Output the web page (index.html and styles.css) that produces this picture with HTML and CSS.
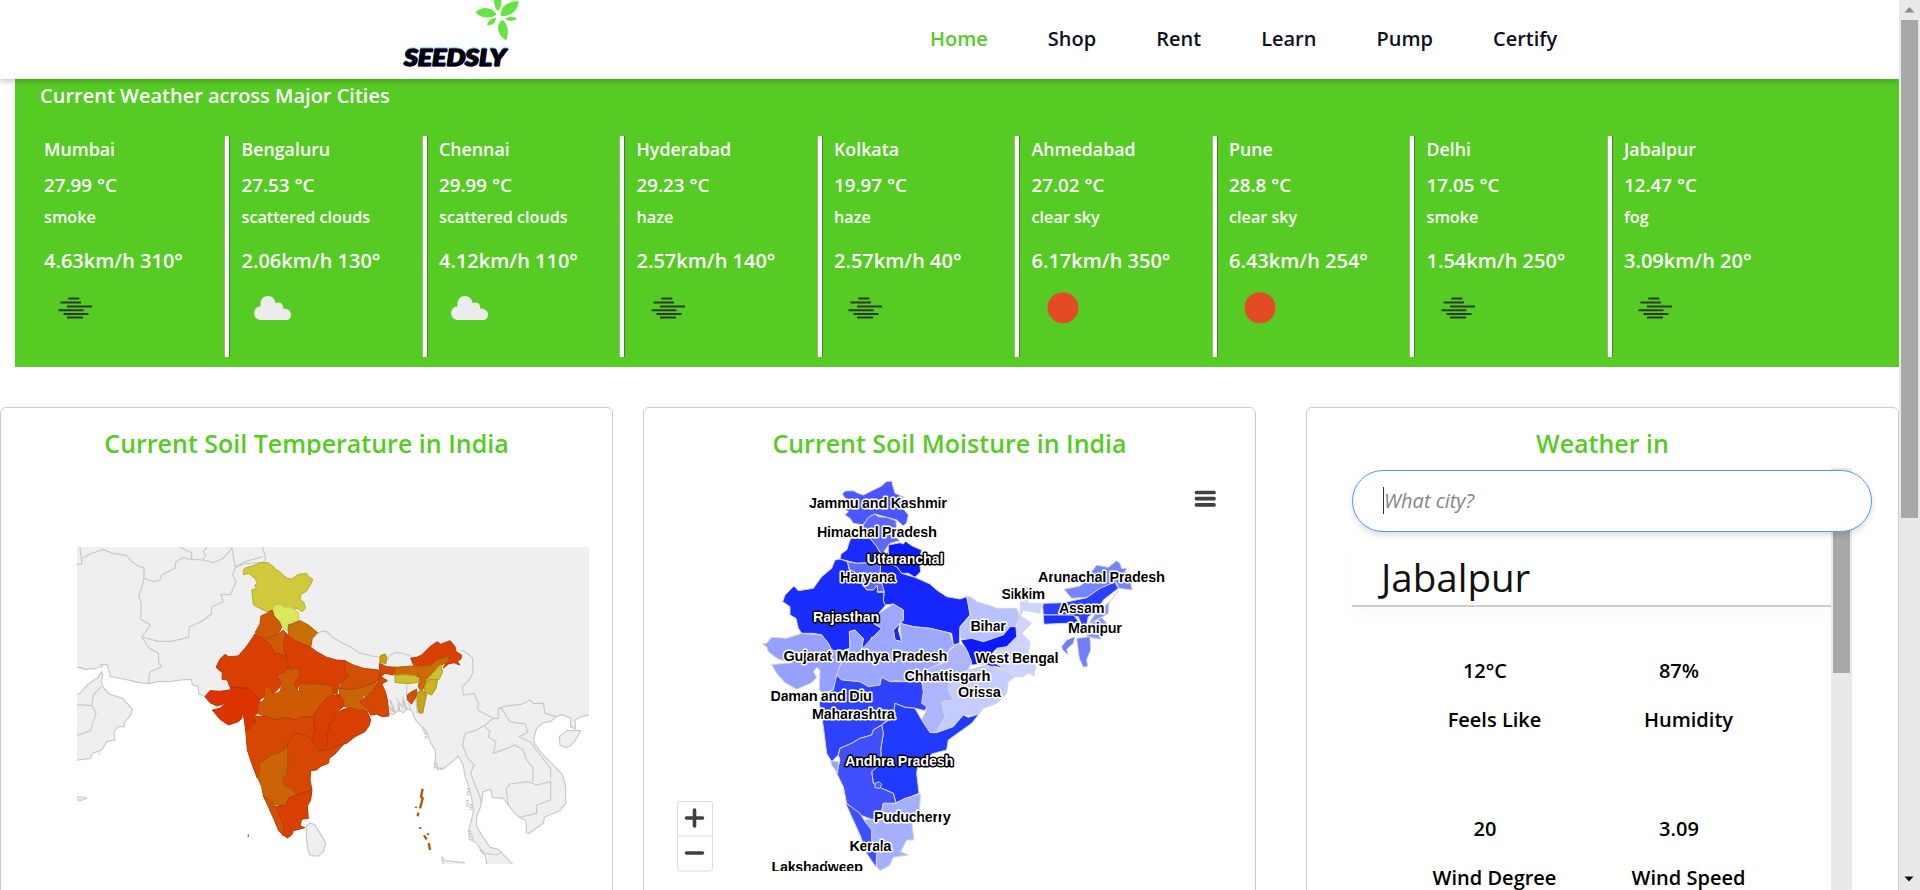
FILE: index.html
```html
<!DOCTYPE html>
<html lang="en">
<head>
<meta charset="utf-8">
<title>Seedsly</title>
<link rel="stylesheet" href="styles.css">
</head>
<body>
<svg class="defs" width="0" height="0" aria-hidden="true">
  <symbol id="haze" viewBox="0 0 40 36"><path d="M12.300 10.500h11M4.500 14.400h20.500M11 18.400h25M2.500 22.200h25M7.500 26h25M11 29.500h16" stroke="#2e3a28" stroke-width="2" fill="none"/></symbol>
  <symbol id="cloud" viewBox="0 0 40 36"><path transform="translate(-3.200 0) scale(1.030 1)" d="M9 32a7 7 0 0 1-1-13.500h1.500C8.500 12 12 8 16.500 8c4.500 0 7 3.200 7.600 7.300 4-2.300 7.900.7 7.400 5.400C36.500 20.500 39 23 39 26.500c0 3-1.500 5.500-4 5.500z" fill="#ececec"/></symbol>
  <symbol id="sun" viewBox="0 0 40 36"><circle cx="19" cy="19.800" r="15.500" fill="#e34a26"/></symbol>
</svg>
<div class="window">
  <div class="page">
    <header class="header">
      <svg class="logo" viewBox="400 0 124 79">
        <g transform="translate(380 0) scale(.33333)" fill="#66e445">
          <path d="M342 0C341 14 345 25 354 34C362 25 365 12 364 0Z"/>
          <path d="M363 48C360 22 379 5 416 3C414 32 394 49 363 48Z"/>
          <path d="M287 38C303 19 333 19 350 43C334 57 307 56 287 38Z"/>
          <path d="M375 57C386 49 401 50 411 55C401 65 387 65 375 57Z"/>
          <path d="M348 54C347 68 338 77 321 76C324 62 333 54 348 54Z"/>
          <path d="M366 59C381 67 389 91 379 121C355 108 344 80 366 59Z"/>
        </g>
        <g class="wordmark">
          <text x="403.500" y="64.700" fill="#35e0e0" stroke="#35e0e0" textLength="102" lengthAdjust="spacingAndGlyphs">SEEDSLY</text>
          <text x="404.500" y="66.300" fill="#f52af5" stroke="#f52af5" textLength="102" lengthAdjust="spacingAndGlyphs">SEEDSLY</text>
          <text x="404" y="65.500" fill="#000" stroke="#000" textLength="102" lengthAdjust="spacingAndGlyphs">SEEDSLY</text>
        </g>
      </svg>
      <nav class="nav"><a class="active">Home</a><a>Shop</a><a>Rent</a><a>Learn</a><a>Pump</a><a>Certify</a></nav>
    </header>

    <section class="cities">
      <h2>Current Weather across Major Cities</h2>
      <div class="city-row">
        <div class="city"><b>Mumbai</b><i>27.99 °C</i><em>smoke</em><i class="wind">4.63km/h 310°</i><svg><use href="#haze"/></svg></div>
        <div class="city"><b>Bengaluru</b><i>27.53 °C</i><em>scattered clouds</em><i class="wind">2.06km/h 130°</i><svg><use href="#cloud"/></svg></div>
        <div class="city"><b>Chennai</b><i>29.99 °C</i><em>scattered clouds</em><i class="wind">4.12km/h 110°</i><svg><use href="#cloud"/></svg></div>
        <div class="city"><b>Hyderabad</b><i>29.23 °C</i><em>haze</em><i class="wind">2.57km/h 140°</i><svg><use href="#haze"/></svg></div>
        <div class="city"><b>Kolkata</b><i>19.97 °C</i><em>haze</em><i class="wind">2.57km/h 40°</i><svg><use href="#haze"/></svg></div>
        <div class="city"><b>Ahmedabad</b><i>27.02 °C</i><em>clear sky</em><i class="wind">6.17km/h 350°</i><svg><use href="#sun"/></svg></div>
        <div class="city"><b>Pune</b><i>28.8 °C</i><em>clear sky</em><i class="wind">6.43km/h 254°</i><svg><use href="#sun"/></svg></div>
        <div class="city"><b>Delhi</b><i>17.05 °C</i><em>smoke</em><i class="wind">1.54km/h 250°</i><svg><use href="#haze"/></svg></div>
        <div class="city"><b>Jabalpur</b><i>12.47 °C</i><em>fog</em><i class="wind">3.09km/h 20°</i><svg><use href="#haze"/></svg></div>
      </div>
    </section>

    <main class="cards">
      <section class="card soil">
        <h3 class="clipped">Current Soil Temperature in India</h3>
        <svg class="temp-map" viewBox="77 547 512 317">
          <g transform="translate(60 540) scale(.33333)" fill="#efefef" stroke="#c9c9c9" stroke-width="3.500" stroke-linejoin="round">
            <path d="M40 10V381L60 383 78 389 90 385 100 388 115 381 128 380 122 374 141 373 147 390 150 409 175 414 200 419 235 427 265 431 300 424 330 425 360 420 393 418 398 435 415 440 416 462 432 468 600 560 900 540 960 520 985 520 1000 524 1015 510 1030 518 1040 505 1055 512 1065 538 1085 560 1100 575 1110 605 1125 630 1127 645 1123 683 1150 686 1185 658 1195 648 1210 675 1215 710 1228 745 1235 775 1240 815 1232 850 1226 870 1228 898 1250 908 1262 930 1275 945 1282 980H1365L1330 944 1315 928 1290 922 1268 890 1250 860 1250 828 1262 800 1270 755 1292 748 1297 772 1330 775 1345 795 1360 815 1378 832 1398 842 1400 885 1450 850 1453 832 1500 812 1517 790 1517 740 1508 705 1470 665 1445 640 1425 612 1420 598 1430 565 1450 548 1470 545 1490 530 1505 524 1532 535 1532 560 1546 567 1545 540 1565 529 1600 523V10Z"/>
            <path d="M40 468L62 458 85 432 115 412 125 395 128 405 124 425 130 442 148 462 188 475 217 508 212 525 195 545 192 560 175 560 162 575 165 600 140 605 125 630 97 640 92 655 40 662Z"/>
            <path d="M40 493L95 497 108 518 92 572 40 590M95 497 100 465 124 440M115 641h5" fill="none"/>
            <path d="M40 770L65 771 80 775 65 781 40 779ZM739 860L750 848 765 855 780 880 797 908 790 935 775 948 750 947 743 925 739 890ZM1498 590L1520 572 1562 572 1550 595 1535 615 1520 623 1500 615Z"/>
            <path d="M60 20L64 57 90 42 130 29 160 40 200 47 212 62 235 79 252 82 252 112 245 145 236 165 244 190 242 238 272 255 245 291 296 304 335 304 386 292 388 260 420 247 455 222 455 200 490 185 482 164 512 163 528 125 518 105 525 85 550 72 610 67 617 55 608 20M252 115L282 125 300 120 305 105 345 85 348 65 370 52 395 60 395 38 360 22M395 58L430 60 437 45 430 35 442 20M430 60L460 68 490 55 515 25 M515 20L525 80 555 65 608 50 M245 291L268 325 295 340 297 370 305 380 270 395 265 431M51 73h14V57" fill="none"/>
            <path d="M773 280L785 274 800 275 812 288 845 308 875 322 895 338 935 348 955 350M980 362L990 345 1010 337 1035 342 1052 348 1060 358M1205 330L1225 342 1238 355 1239 398 1225 422 1207 440 1210 465 1242 460 1255 490 1253 510 1300 535 1315 535 1315 505 1345 497 1385 493 1410 480 1420 490 1450 490 1455 520 1490 530M1315 505L1325 505 1350 545 1378 550 1395 550 1403 578 1376 590 1410 605 1440 645 1472 685 1472 715M1300 535L1275 555 1245 572 1215 580 1208 615 1220 650 1242 675 1232 700 1245 735 1258 765 1265 790M1275 560L1290 575 1285 590 1308 605 1300 640 1340 625 1365 615 1390 630 1400 660 1420 685 1418 725M1338 745L1350 732 1405 725 1430 735 1472 725 1472 780 1430 795 1430 820 1378 832M1338 745L1345 795M1280 940L1310 945 1325 935" fill="none"/>
            <path d="M1018 430L1040 428 1040 470 1065 465 1072 520M1010 475L1025 500M1030 470L1028 505M1045 475L1052 510" fill="none"/>
            <path d="M978 490L1000 515M990 480L1005 518M1015 490L1018 515M1030 480L1040 510" fill="none" stroke-width="6"/>
            <path d="M1088 562l8 20M1100 580l-4 18M1127 670l8 18 15-2M1225 745v22M1222 780v20M1232 792v18M1228 872l12 28M1262 930l14 14" fill="none" stroke-width="8" stroke-dasharray="5 3"/>
            <path d="M1145 950L1155 962 1212 968V975H1150Z"/>
            <path d="M1410 882L1440 886 1430 960 1380 960 1380 882Z" fill="#fff" stroke="none"/>
          </g>
          <g transform="translate(200 550) scale(.33333)" stroke-width="3" stroke-linejoin="round">
            <path d="M130 62L135 54 150 50 165 45 180 38 205 38 220 50 230 60 240 65 250 76 262 85 275 87 285 80 295 73 320 70 326 80 338 88 334 100 328 110 318 125 303 132 300 148 312 158 316 175 306 185 292 175 270 180 255 172 240 162 222 166 218 180 200 185 180 175 160 165 158 145 155 120 170 115 164 106 172 100 165 85 155 78 147 70 130 74Z" fill="#d0c93c" stroke="#b3ad33"/>
            <path d="M218 180L222 166 240 162 255 172 270 170 285 180 295 188 297 213 275 215 265 225 263 242 250 232 240 215 228 205 220 195Z" fill="#dbe85f" stroke="#bccb4f"/>
            <path d="M183 198L200 190 212 182 218 182 222 198 238 215 245 232 235 250 215 262 185 262 165 248 180 222Z" fill="#cf5a05" stroke="#b04c04"/>
            <path d="M188 265L215 262 240 248 250 240 258 250 250 275 258 318 240 312 222 308 212 285 195 275Z" fill="#cf5a05" stroke="#b04c04"/>
            <path d="M265 225L285 218 300 212 325 225 353 248 337 265 332 292 310 285 285 272 265 262Z" fill="#c96e07" stroke="#ab5e06"/>
            <path d="M258 250L270 262 285 272 332 292 350 305 380 322 410 330 435 332 440 345 435 360 447 378 430 392 418 405 410 432 400 430 398 408 350 402 320 405 300 400 290 420 280 400 297 380 298 358 265 355 258 318 250 290Z" fill="#da3f02" stroke="#b93602"/>
            <path d="M165 252L188 265 212 285 222 308 240 312 258 318 265 345 262 358 235 380 245 400 240 412 220 432 212 412 195 412 192 440 178 450 160 430 145 415 110 413 90 412 82 390 66 388 67 368 48 352 60 328 75 313 85 320 115 318 135 295 150 275Z" fill="#da3f02" stroke="#b93602"/>
            <path d="M15 440L30 422 60 424 90 420 92 412 145 415 162 432 180 450 172 490 160 500 168 518 150 535 137 540 133 510 128 485 125 505 115 515 85 525 60 508 37 480 60 475 77 460 50 468 30 458Z" fill="#dc3400" stroke="#bd2d00"/>
            <path d="M195 412L212 412 218 434 240 425 248 400 235 385 262 358 298 355 300 375 285 395 280 410 298 425 300 400 350 402 398 408 400 435 385 440 365 460 352 480 340 500 300 502 290 510 255 502 225 510 200 500 172 490 175 462 192 450Z" fill="#cf5a05" stroke="#b04c04"/>
            <path d="M137 540L150 535 168 518 160 498 200 500 225 510 255 502 290 510 300 502 340 500 345 520 342 550 335 565 310 555 285 548 265 575 262 592 240 608 215 615 195 630 178 640 180 660 172 685 155 640 142 600Z" fill="#d54703" stroke="#b63c02"/>
            <path d="M365 460L385 440 418 432 432 450 430 470 405 490 400 515 388 520 390 545 380 548 385 570 370 600 355 603 340 580 335 565 345 545 340 500 352 480Z" fill="#da3f02" stroke="#b93602"/>
            <path d="M432 478L450 472 480 482 500 480 512 510 508 525 495 545 465 560 440 580 405 590 390 598 372 602 385 570 380 548 390 545 388 520 400 515 405 490Z" fill="#da3f02" stroke="#b93602"/>
            <path d="M418 415L450 418 485 412 520 395 532 400 520 425 490 438 480 455 502 475 480 482 450 472 432 470 432 450 420 435Z" fill="#cb6406" stroke="#ad5505"/>
            <path d="M435 332L460 345 490 355 535 360 540 375 530 395 485 412 450 418 418 415 430 392 447 378 435 360Z" fill="#d15004" stroke="#b24403"/>
            <path d="M538 340L560 350 588 352 580 375 555 370 543 380 562 392 545 402 556 425 562 450 567 498 545 500 530 492 512 495 500 475 480 455 495 440 520 425 532 400 540 375Z" fill="#d54703" stroke="#b63c02"/>
            <path d="M285 548L310 555 335 565 340 585 355 603 390 598 435 578 405 612 388 625 385 640 360 650 350 660 332 662 330 690 336 720 310 728 290 735 270 715 250 705 248 685 262 670 262 592 265 575Z" fill="#d54703" stroke="#b63c02"/>
            <path d="M178 640L195 630 215 615 240 608 262 592 264 640 260 670 248 685 250 705 270 715 290 735 265 745 260 762 240 768 215 758 190 738 185 710 174 685 180 660Z" fill="#cb6406" stroke="#ad5505"/>
            <path d="M230 770L260 765 265 745 290 735 336 720 332 750 322 768 325 805 305 808 300 828 315 833 280 842 275 855 262 864 250 855 252 830 240 800Z" fill="#da3f02" stroke="#b93602"/>
            <path d="M190 738L215 758 230 770 240 800 252 830 250 858 235 840 222 808 205 770Z" fill="#d15004" stroke="#b24403"/>
            <path d="M540 318L555 312 560 322 558 340 540 338Z" fill="#c7a114" stroke="#a98910"/>
            <path d="M632 325L650 322 665 315 690 290 712 275 722 283 750 272 765 290 768 305 785 315 782 328 772 333 779 345 762 338 745 342 730 354 745 325 735 320 700 338 690 347 642 347Z" fill="#da3f02" stroke="#b93602"/>
            <path d="M585 352L640 348 690 347 710 330 745 319 745 335 725 345 700 370 680 392 665 425 655 410 660 385 650 378 620 375 585 378Z" fill="#cb6b07" stroke="#ad5b06"/>
            <path d="M585 376L620 374 648 378 660 396 625 401 585 397Z" fill="#ccc02b" stroke="#aea424"/>
            <path d="M677 392L700 368 722 343 728 365 718 388 690 390Z" fill="#ccc02b" stroke="#aea424"/>
            <path d="M674 408L688 388 713 390 708 415 695 435 672 425Z" fill="#cab422" stroke="#ac991d"/>
            <path d="M650 430L662 420 680 432 672 470 668 490 657 488 652 460Z" fill="#c5a81a" stroke="#a88f16"/>
            <path d="M622 435L635 425 650 418 648 440 635 462 622 450Z" fill="#d05208" stroke="#b24403"/>
            <path d="M668 716L663 740 668 745 660 775M648 770v4M655 788L653 799M661 832v5M672 856l8 12M684 850v5M686 880l4 20M143 857h4" fill="none" stroke="#b95204" stroke-width="7"/>
          </g>
        </svg>
      </section>

      <section class="card moisture">
        <h3>Current Soil Moisture in India</h3>
        <svg class="moist-map" viewBox="663 471 570 401">
          <g stroke="#d6d6d6" stroke-width="3" stroke-linejoin="round">
            <g transform="translate(640 400) scale(.33333)">
              <path d="M607 283L615 273 640 272 655 280 670 285 700 270 725 258 738 245 755 243 758 255 765 280 790 290 785 320 805 345 800 368 790 378 770 360 740 352 705 342 685 355 668 375 640 370 630 355 615 345 625 335 607 320 620 300Z" fill="#4b56ff"/>
              <path d="M668 378L685 352 705 342 715 350 740 352 768 362 770 385 765 410 780 422 750 430 735 450 728 468 710 440 690 415 672 400Z" fill="#5d66ff"/>
              <path d="M632 415L690 415 710 440 722 460 700 488 650 490 600 477 603 462 620 450Z" fill="#1a2cff"/>
              <path d="M745 435L780 428 790 432 797 424 815 437 845 450 838 480 842 515 825 532 805 520 785 520 770 500 745 490Z" fill="#0d1cff"/>
              <path d="M622 485L650 490 700 488 715 470 722 490 720 530 733 555 733 575 712 575 712 556 700 570 680 570 665 550 645 545 643 515 630 510Z" fill="#5d68ff"/>
              <path d="M600 477L622 485 628 510 643 515 645 545 665 550 680 570 700 570 712 556 712 577 733 577 730 600 738 615 720 635 700 670 725 685 715 710 695 712 685 735 665 748 670 715 645 690 628 695 630 745 600 755 575 750 565 730 545 705 520 700 485 700 475 685 468 655 450 645 450 620 428 605 435 585 462 558 475 572 520 565 545 530 575 505 585 480Z" fill="#1a2dff"/>
              <path d="M722 495L728 468 745 455 745 490 770 500 785 520 825 532 870 552 890 570 920 590 960 597 980 590 985 615 990 645 960 680 958 735 940 735 935 700 870 685 820 680 780 670 775 690 785 725 765 720 760 690 790 660 790 630 760 612 735 615 730 600 733 575 720 530Z" fill="#1626ff"/>
            </g>
            <g transform="translate(900 460) scale(.33333)">
              <path d="M362 425L390 430 425 430 420 460 395 455 370 450 362 468 395 490 365 520 390 545 385 580 407 620 402 648 385 638 370 650 345 650 310 630 285 605 290 565 320 560 350 530 350 500 360 470Z" fill="#cdd4ff"/>
              <path d="M360 395L375 378 388 388 385 425 362 420Z" fill="#d0d6ff"/>
              <path d="M200 408L215 412 230 425 270 437 290 445 350 445 360 470 345 500 330 500 310 530 250 545 182 535 180 505 212 465 205 435Z" fill="#b7c2ff"/>
              <path d="M182 540L215 535 250 545 310 525 330 500 348 500 350 530 320 560 290 565 260 600 285 610 312 625 280 618 280 632 255 612 215 615 205 580Z" fill="#0d1aff"/>
              <path d="M492 388L540 378 575 350 575 335 590 315 625 322 650 302 660 310 665 325 680 325 672 345 692 370 697 390 655 385 650 368 590 395 560 412 515 415Z" fill="#7684ff"/>
              <path d="M590 455L630 425 655 392 627 430 625 460 600 475 565 492ZM570 490L605 472 620 490 600 538 560 530Z" fill="#8a96ff"/>
              <path d="M428 440L430 430 490 428 560 413 600 385 645 366 655 385 610 420 590 455 565 470 560 495 548 505 535 470 480 465 430 465Z" fill="#2b40ff"/>
              <path d="M430 465L520 465 540 490 490 490 432 493Z" fill="#1a32ff"/>
              <path d="M530 535L570 530 572 570 560 600 563 618 550 622 538 595ZM485 560L500 540 525 530 520 550 500 568 505 585 488 570Z" fill="#6f7dff"/>
            </g>
            <g transform="translate(660 640) scale(.33333)">
              <path d="M307 12L320 10 335 -8 380 -5 425 -20 485 -15 505 10 515 30 540 35 545 65 530 110 520 150 490 160 478 150 480 90 470 82 460 95 470 112 455 128 410 148 375 128 350 100 335 74 395 68 355 58 325 35 320 20Z" fill="#96a0ff"/>
              <path d="M540 35L570 25 568 -25 585 -30 610 -5 605 28 640 -10 665 -35 640 -50 658 -80 700 -108 730 -90 730 -60 700 -30 705 0 725 5 720 -50 760 -40 810 -35 870 -20 880 15 898 10 870 25 850 65 800 90 785 125 735 125 710 122 690 125 665 112 660 135 625 140 600 125 545 120 530 105 545 65Z" fill="#9ca8ff"/>
              <path d="M790 100L815 82 850 70 865 35 895 10 915 20 935 65 925 90 870 110 865 150 880 180 845 185 855 230 830 275 810 278 785 240 800 210 785 190Z" fill="#adb5ff"/>
              <path d="M925 90L980 75 1030 90 1065 110 1045 125 1040 160 1010 190 970 205 955 225 910 225 880 260 830 278 855 230 845 185 880 180 865 150 870 110Z" fill="#c5ccff"/>
              <path d="M530 105L545 120 600 125 625 140 660 135 665 112 690 125 735 125 785 125 790 155 785 190 800 200 795 212 765 205 735 202 705 190 700 230 680 240 665 255 640 270 635 285 600 295 575 310 540 325 535 345 515 365 500 340 490 260 478 190 490 160 520 150Z" fill="#2f43ff"/>
              <path d="M705 190L735 202 765 205 785 240 810 278 830 278 880 260 910 225 925 232 957 222 935 250 900 275 865 300 860 330 815 342 805 355 775 365 770 400 777 460 740 475 708 488 700 460 665 445 640 430 635 395 650 380 665 370 662 330 670 280 665 255 700 230Z" fill="#213aff"/>
              <path d="M535 345L540 325 575 310 600 295 635 285 640 270 665 255 670 280 662 330 665 370 635 395 640 430 665 445 700 460 708 490 670 490 665 515 640 540 600 525 560 490 550 440 530 400 540 360Z" fill="#4050ff"/>
              <path d="M512 362L535 365 533 400 515 375Z" fill="#96a0ff"/>
              <path d="M645 430l12-5 8 8-5 12-15-2z" fill="#4b5aff"/>
              <path d="M612 540L640 538 665 515 670 490 708 490 735 475 782 462 778 510 755 545 762 600 740 600 722 635 745 645 700 652 690 675 660 692 650 680 650 640 635 600Z" fill="#a4b0ff"/>
              <path d="M556 488L600 520 615 545 635 570 635 600 650 640 648 682 620 640 600 585 575 530Z" fill="#3d50ff"/>
            </g>
          </g>
          <g class="labels">
            <text x="809" y="508" textLength="138">Jammu and Kashmir</text>
            <text x="817" y="537" textLength="120">Himachal Pradesh</text>
            <text class="light" x="866.500" y="564" textLength="77">Uttaranchal</text>
            <text x="840" y="582" textLength="55.500">Haryana</text>
            <text class="light" x="813" y="622.300" textLength="66.500">Rajasthan</text>
            <text x="1038" y="582" textLength="127">Arunachal Pradesh</text>
            <text x="1001.500" y="599" textLength="43.500">Sikkim</text>
            <text x="1059" y="613.300" textLength="45.500">Assam</text>
            <text x="970.500" y="631" textLength="35.500">Bihar</text>
            <text x="1068" y="633.300" textLength="54">Manipur</text>
            <text x="783.500" y="661.300" textLength="48.500">Gujarat</text>
            <text x="836.500" y="661.300" textLength="111">Madhya Pradesh</text>
            <text x="975.500" y="663.300" textLength="83">West Bengal</text>
            <text x="904.500" y="681.300" textLength="86">Chhattisgarh</text>
            <text x="958" y="697.300" textLength="43">Orissa</text>
            <text x="770.500" y="701.300" textLength="101.500">Daman and Diu</text>
            <text x="812" y="719.300" textLength="83">Maharashtra</text>
            <text class="light" x="845" y="766.300" textLength="108.500">Andhra Pradesh</text>
            <text x="874" y="822.300" textLength="77">Puducherry</text>
            <text x="849.500" y="851.300" textLength="42">Kerala</text>
            <svg x="760" y="850" width="120" height="21" viewBox="760 850 120 21"><text x="771.500" y="872.300" textLength="91.500">Lakshadweep</text></svg>
          </g>
          <path d="M1196.500 492.500h17.500M1196.500 498.700h17.500M1196.500 504.900h17.500" stroke="#404040" stroke-width="3.700" stroke-linecap="round"/>
          <g fill="none" stroke="#dcdcdc"><rect x="677.500" y="801.500" width="35" height="69.500" rx="2.500"/><path d="M677.500 836h35"/></g>
          <path d="M686.500 818h16M694.500 810v16M686.500 853h16" stroke="#404040" stroke-width="3.600" stroke-linecap="round"/>
        </svg>
      </section>

      <section class="card weather">
        <h3>Weather in</h3>
        <div class="panel">
          <div class="search"><span class="caret"></span>What city?</div>
          <div class="place">Jabalpur</div>
          <div class="stats">
            <div class="stat"><span>12°C</span><span class="name">Feels Like</span></div>
            <div class="stat"><span>87%</span><span class="name">Humidity</span></div>
            <div class="stat"><span>20</span><span class="name">Wind Degree</span></div>
            <div class="stat"><span>3.09</span><span class="name">Wind Speed</span></div>
          </div>
          <div class="inner-scroll"><div class="inner-thumb"></div></div>
        </div>
      </section>
    </main>
  </div>
  <div class="scrollbar">
    <svg viewBox="0 0 21 20"><path d="M5.500 12.500L10.500 7l5 5.500z" fill="#8a8a8a"/></svg>
    <div class="thumb"></div>
    <svg viewBox="0 0 21 20"><path d="M5.500 6.500h9L10 11.500z" fill="#111"/></svg>
  </div>
</div>
</body>
</html>
```
FILE: styles.css
```css
* { box-sizing: border-box; }
body { margin: 0; overflow: hidden; font-family: "Open Sans", "Noto Sans", sans-serif; background: #fff; color: #000; }
.defs { position: absolute; }
.window { display: flex; width: 1920px; height: 890px; overflow: hidden; }
.page { width: 1899px; height: 890px; overflow: hidden; }

.header { position: relative; display: flex; height: 79px; padding-left: 400px; background: #fff; box-shadow: 0 2px 6px rgba(0, 0, 0, .24); }
.logo { width: 124px; height: 79px; }
.wordmark { font: italic 900 22px Lato, sans-serif; stroke-width: 1.2px; stroke-linejoin: round; }
.nav { display: flex; gap: 60px; padding: 24px 0 0 406px; font-size: 20px; font-weight: 600; line-height: 30px; color: #10101e; }
.nav .active { color: #56cb24; }

.cities { margin-left: 15px; height: 288px; padding: 2px 0 0 25px; background: #56cb24; color: #fff; }
.cities h2 { margin: 0; font-size: 20px; font-weight: 600; line-height: 30px; }
.city-row { display: flex; padding-top: 25px; }
.city { display: flex; flex-direction: column; flex: none; width: 197.5px; height: 221px; padding-left: 4px; font-weight: 600; white-space: nowrap; }
.city:not(:last-child) { background: linear-gradient(90deg, #8bbd72 0 1px, #fff 1px 5px, #4f7d3a 5px 6px) no-repeat 184px 0 / 6px 100%; }
.city b, .city i, .city em { font-style: normal; font-weight: 600; }
.city b { font-size: 17.8px; line-height: 27px; }
.city i { margin-top: 7px; font-size: 18.8px; line-height: 30px; }
.city em { margin-top: 5px; font-size: 16.2px; line-height: 24px; }
.city .wind { margin-top: 17px; font-size: 20px; }
.city svg { width: 40px; height: 36px; margin: 12px 0 0 12px; }

.cards { display: flex; margin-top: 40px; height: 520px; }
.card { flex: none; height: 520px; border: 1px solid #ccc; border-radius: 6px; }
.card h3 { margin: 0; padding-top: 16px; height: 47px; font-size: 25px; font-weight: 600; line-height: 38px; text-align: center; color: #56cb24; }
.soil { width: 613px; }
.card h3.clipped { overflow: hidden; }
.temp-map { display: block; width: 512px; height: 317px; margin: 92px 0 0 76px; }
.moisture { width: 613px; margin-left: 30px; }
.moist-map { display: block; width: 570px; height: 401px; margin: 16px 0 0 19px; }
.labels { font: bold 14.7px "Liberation Sans", Arial, sans-serif; fill: #000; stroke: #fff; stroke-width: 3px; stroke-linejoin: round; paint-order: stroke; }
.labels .light { fill: #fff; stroke: #000; }

.weather { width: 593px; margin-left: 50px; }
.panel { position: relative; margin: 13px 0 0 45px; width: 521px; height: 422px; padding-top: 2px; }
.search { position: relative; z-index: 1; display: flex; align-items: center; width: 520px; height: 62px; padding: 0 0 1px 30px; border: 1px solid #5796f5; border-radius: 31px; background: #fff; box-shadow: 0 3px 6px rgba(0, 0, 0, .14); font-size: 20px; font-style: italic; color: #858585; }
.caret { width: 1px; height: 27px; background: #333; }
.place { width: 479px; height: 75px; padding: 18px 0 0 29px; border-bottom: 2px solid #ccc; box-shadow: 0 14px 14px rgba(0, 0, 0, .018); font-size: 38.5px; line-height: 54px; color: #111; }
.stats { display: grid; grid-template-columns: 190px 198px; padding: 49px 0 0 38px; font-size: 20px; font-weight: 600; line-height: 30px; }
.stat { display: flex; flex-direction: column; height: 158px; align-items: center; }
.stat .name { margin: 19px -19px 0 0; }
.inner-scroll { position: absolute; left: 479px; top: 0; width: 21px; height: 422px; padding: 20px 2px 0; background: #e9e9e9; }
.inner-thumb { height: 185px; background: #a8a8a8; }

.scrollbar { display: flex; flex-direction: column; width: 21px; height: 890px; background: #e9e9e9; }
.scrollbar svg { flex: none; width: 21px; height: 20px; }
.thumb { height: 498px; margin: 0 2px 352px; background: #a8a8a8; }
```
